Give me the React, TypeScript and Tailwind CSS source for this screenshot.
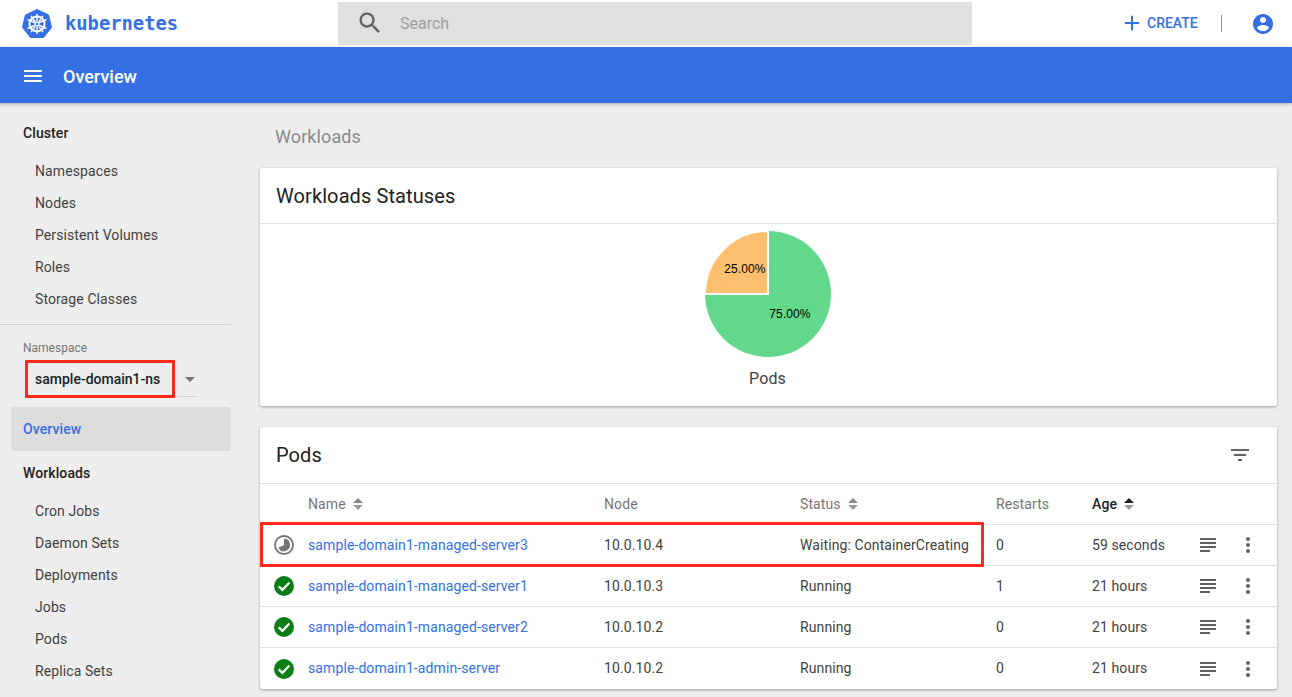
import React from 'react'
import { Plus } from 'lucide-react'

const clusterItems = ['Namespaces', 'Nodes', 'Persistent Volumes', 'Roles', 'Storage Classes']
const workloadItems = ['Cron Jobs', 'Daemon Sets', 'Deployments', 'Jobs', 'Pods', 'Replica Sets']

const pods = [
  { name: 'sample-domain1-managed-server3', node: '10.0.10.4', status: 'Waiting: ContainerCreating', restarts: '0', age: '59 seconds', pending: true },
  { name: 'sample-domain1-managed-server1', node: '10.0.10.3', status: 'Running', restarts: '1', age: '21 hours', pending: false },
  { name: 'sample-domain1-managed-server2', node: '10.0.10.2', status: 'Running', restarts: '0', age: '21 hours', pending: false },
  { name: 'sample-domain1-admin-server', node: '10.0.10.2', status: 'Running', restarts: '0', age: '21 hours', pending: false },
]

const rowCols = 'grid grid-cols-[48px_296px_196px_196px_96px_100px_32px_48px] items-center'

const KubeLogo = () => (
  <svg width="30" height="30" viewBox="0 0 30 30">
    <path d="M15 0.5 L26.6 6 L29.5 18.4 L21.5 28.5 L8.5 28.5 L0.5 18.4 L3.4 6 Z" fill="#3470e4" stroke="#3470e4" strokeLinejoin="round" />
    <g stroke="#fff" fill="none">
      <circle cx="15" cy="15" r="7.5" strokeWidth="2" />
      <circle cx="15" cy="15" r="2" strokeWidth="1.4" />
      <path strokeWidth="1.4" d="M15 5v7M15 18v7M5.6 10.5l7 3M17.4 16.5l7 3M24.4 10.5l-7 3M12.6 16.5l-7 3M9 7l4 5.500M17 18l4 5M21 7l-4 5.500M13 18l-4 5" />
    </g>
  </svg>
)

const SortArrows = ({ active }: { active?: boolean }) => (
  <svg width="10" height="14" viewBox="0 0 10 14" className="ml-[7px]">
    <path d="M5 1l5 5H0z" fill={active ? '#1f1f1f' : '#8a8a8a'} />
    <path d="M0 8h10l-5 5z" fill="#9a9a9a" />
  </svg>
)

const StatusIcon = ({ pending }: { pending: boolean }) =>
  pending ? (
    <svg width="20" height="20" viewBox="0 0 20 20">
      <circle cx="10" cy="10" r="9" fill="none" stroke="#757575" strokeWidth="1.8" />
      <path d="M10 3.800A6.200 6.200 0 1 1 4.400 12.700L10 10Z" fill="#757575" />
    </svg>
  ) : (
    <svg width="20" height="20" viewBox="0 0 20 20">
      <circle cx="10" cy="10" r="10" fill="#0a7d16" />
      <path d="M4.800 10.400l3.600 3.500 7-7.300" fill="none" stroke="#fff" strokeWidth="2.200" />
    </svg>
  )

const LogsIcon = () => (
  <svg width="16" height="14" viewBox="0 0 16 14">
    <path d="M0 0h16v2H0zM0 4h16v2H0zM0 8h16v2H0zM0 12h10v2H0z" fill="#616161" />
  </svg>
)

const DotsIcon = () => (
  <svg width="4" height="16" viewBox="0 0 4 16">
    <circle cx="2" cy="2" r="2" fill="#616161" />
    <circle cx="2" cy="8" r="2" fill="#616161" />
    <circle cx="2" cy="14" r="2" fill="#616161" />
  </svg>
)

const PieChart = () => (
  <svg width="130" height="130" viewBox="0 0 130 130">
    <circle cx="65" cy="65" r="63" fill="#61d88a" />
    <path d="M65 65V2A63 63 0 0 0 2 65Z" fill="#fec06f" stroke="#fff" strokeWidth="2" />
    <path d="M65 2V65H2" fill="none" stroke="#fff" strokeWidth="2" />
    <text x="42" y="44" textAnchor="middle" fontSize="12" fill="#000" fontFamily="Liberation Sans, sans-serif">25.00%</text>
    <text x="87" y="89" textAnchor="middle" fontSize="12" fill="#000" fontFamily="Liberation Sans, sans-serif">75.00%</text>
  </svg>
)

const App: React.FC = () => {
  return (
    <div className="h-[697px] w-[1292px] overflow-hidden bg-[#eeeeee] font-['Roboto',sans-serif] tracking-[0.1px] text-[#212121]">
      <header className="flex h-[47px] items-center bg-white">
        <div className="flex w-[338px] items-center pl-[22px]">
          <KubeLogo />
          <span className="ml-[13px] mt-[2px] font-['DejaVu_Sans_Mono',monospace] text-[18.8px] font-bold tracking-normal text-[#3470e4]">kubernetes</span>
        </div>
        <div className="mb-[1px] flex h-[43px] w-[634px] items-center bg-[#e0e0e0] pl-[18px]">
          <svg width="28" height="28" viewBox="0 0 24 24">
            <path fill="#616161" d="M15.500 14h-.790l-.280-.270C15.410 12.590 16 11.110 16 9.500 16 5.910 13.090 3 9.500 3S3 5.910 3 9.500 5.910 16 9.500 16c1.610 0 3.090-.590 4.230-1.570l.270.280v.790l5 4.990L20.490 19l-4.990-5zm-6 0C7.010 14 5 11.990 5 9.500S7.010 5 9.500 5 14 7.010 14 9.500 11.990 14 9.500 14z" />
          </svg>
          <span className="ml-[16px] mt-[1px] text-[16px] tracking-normal text-[#9e9e9e]">Search</span>
        </div>
        <div className="ml-[149px] flex items-center text-[#3470e4]">
          <Plus size={22} strokeWidth={2.2} className="mb-[1px]" />
          <span className="ml-[4px] text-[14px] font-medium tracking-normal">CREATE</span>
          <div className="ml-[23px] h-[17px] w-px bg-[#3470e4] opacity-70" />
          <svg width="24" height="24" viewBox="0 0 24 24" className="ml-[29px]">
            <path fill="#3470e4" d="M12 2C6.480 2 2 6.480 2 12s4.480 10 10 10 10-4.480 10-10S17.520 2 12 2zm0 3c1.660 0 3 1.340 3 3s-1.340 3-3 3-3-1.340-3-3 1.340-3 3-3zm0 14.200c-2.500 0-4.710-1.280-6-3.220.030-1.990 4-3.080 6-3.080 1.990 0 5.970 1.090 6 3.080-1.290 1.940-3.500 3.220-6 3.220z" />
          </svg>
        </div>
      </header>

      <div className="flex h-[56px] items-center bg-[#3470e4] pl-[21px] pt-[1px] text-white shadow-[0_1px_3px_rgba(0,0,0,0.3)]">
        <svg width="24" height="24" viewBox="0 0 24 24">
          <path fill="#fff" d="M3 18h18v-2H3v2zm0-5h18v-2H3v2zm0-7v2h18V6H3z" />
        </svg>
        <span className="ml-[18px] mt-[1px] text-[18px] font-medium tracking-normal">Overview</span>
      </div>

      <div className="flex">
        <aside className="w-[260px] shrink-0 text-[14px]">
          <div className="w-[231px] border-b border-[#d6d6d6] pb-[9px] pt-[20px]">
            <div className="pl-[23px] font-medium leading-[20px]">Cluster</div>
            <div className="mt-[12px]">
              {clusterItems.map((item) => (
                <div key={item} className="flex h-[32px] items-center pl-[35px] text-[#424242]">{item}</div>
              ))}
            </div>
          </div>
          <div className="pl-[23px] pt-[15px] text-[12px] leading-[16px] tracking-normal text-[#757575]">Namespace</div>
          <div className="relative ml-[23px] mt-[5px] flex h-[36px] w-[174px] items-center border-b border-[#d6d6d6]">
            <span className="mt-[2px] pl-[12px] font-medium tracking-normal text-[#212121]">sample-domain1-ns</span>
            <div className="absolute left-[162px] top-[16px] h-0 w-0 border-x-[5px] border-t-[5px] border-x-transparent border-t-[#757575]" />
            <div className="absolute left-[2px] top-[-1px] h-[38px] w-[150px] border-[3px] border-[#ff2a1c]" />
          </div>
          <div className="ml-[11px] mt-[10px] flex h-[44px] w-[220px] items-center rounded-[2px] bg-[#dddddd] pl-[12px] font-medium text-[#3470e4]">Overview</div>
          <div className="mt-[12px] pl-[23px] font-medium leading-[20px]">Workloads</div>
          <div className="mt-[12px]">
            {workloadItems.map((item) => (
              <div key={item} className="flex h-[32px] items-center pl-[35px] text-[#424242]">{item}</div>
            ))}
          </div>
        </aside>

        <main className="w-[1017px] shrink-0">
          <div className="pl-[15px] pt-[22px] text-[18px] leading-[24px] text-[#8a8a8a]">Workloads</div>
          <section className="mt-[19px] h-[238px] rounded-[2px] bg-white shadow-[0_1px_3px_rgba(0,0,0,0.35)]">
            <div className="flex h-[56px] items-center border-b border-[#e0e0e0] pl-[16px] text-[20px]">Workloads Statuses</div>
            <div className="flex flex-col items-center pr-[2px] pt-[5px]">
              <PieChart />
              <div className="mt-[10px] text-[16px] leading-[20px] text-[#424242]">Pods</div>
            </div>
          </section>

          <section className="mt-[21px] rounded-[2px] bg-white shadow-[0_1px_3px_rgba(0,0,0,0.35)]">
            <div className="flex h-[57px] items-center justify-between border-b border-[#e0e0e0] pl-[16px] pr-[28px] text-[20px]">
              <span>Pods</span>
              <svg width="18" height="12" viewBox="0 0 18 12"><path d="M0 0h18v2H0zM3 5h12v2H3zM7 10h4v2H7z" fill="#616161" /></svg>
            </div>
            <div className={`${rowCols} h-[41px] border-b border-[#e0e0e0] text-[14px] text-[#757575]`}>
              <div />
              <div className="flex items-center">Name<SortArrows /></div>
              <div>Node</div>
              <div className="flex items-center">Status<SortArrows /></div>
              <div>Restarts</div>
              <div className="flex items-center font-medium text-[#212121]">Age<SortArrows active /></div>
            </div>
            {pods.map((pod, i) => (
              <div key={pod.name} className={`${rowCols} relative h-[41px] border-b border-[#e0e0e0] text-[14px] text-[#424242] last:border-b-0`}>
                <div className="pl-[14px]"><StatusIcon pending={pod.pending} /></div>
                <div className="text-[#3470e4]">{pod.name}</div>
                <div>{pod.node}</div>
                <div className="whitespace-nowrap">{pod.status}</div>
                <div>{pod.restarts}</div>
                <div>{pod.age}</div>
                <div className="flex justify-center"><LogsIcon /></div>
                <div className="flex justify-center"><DotsIcon /></div>
                {i === 0 && <div className="absolute left-0 top-[-3px] h-[45px] w-[724px] border-[3px] border-[#ff2a1c]" />}
              </div>
            ))}
          </section>
        </main>
      </div>
    </div>
  )
}

export default App
